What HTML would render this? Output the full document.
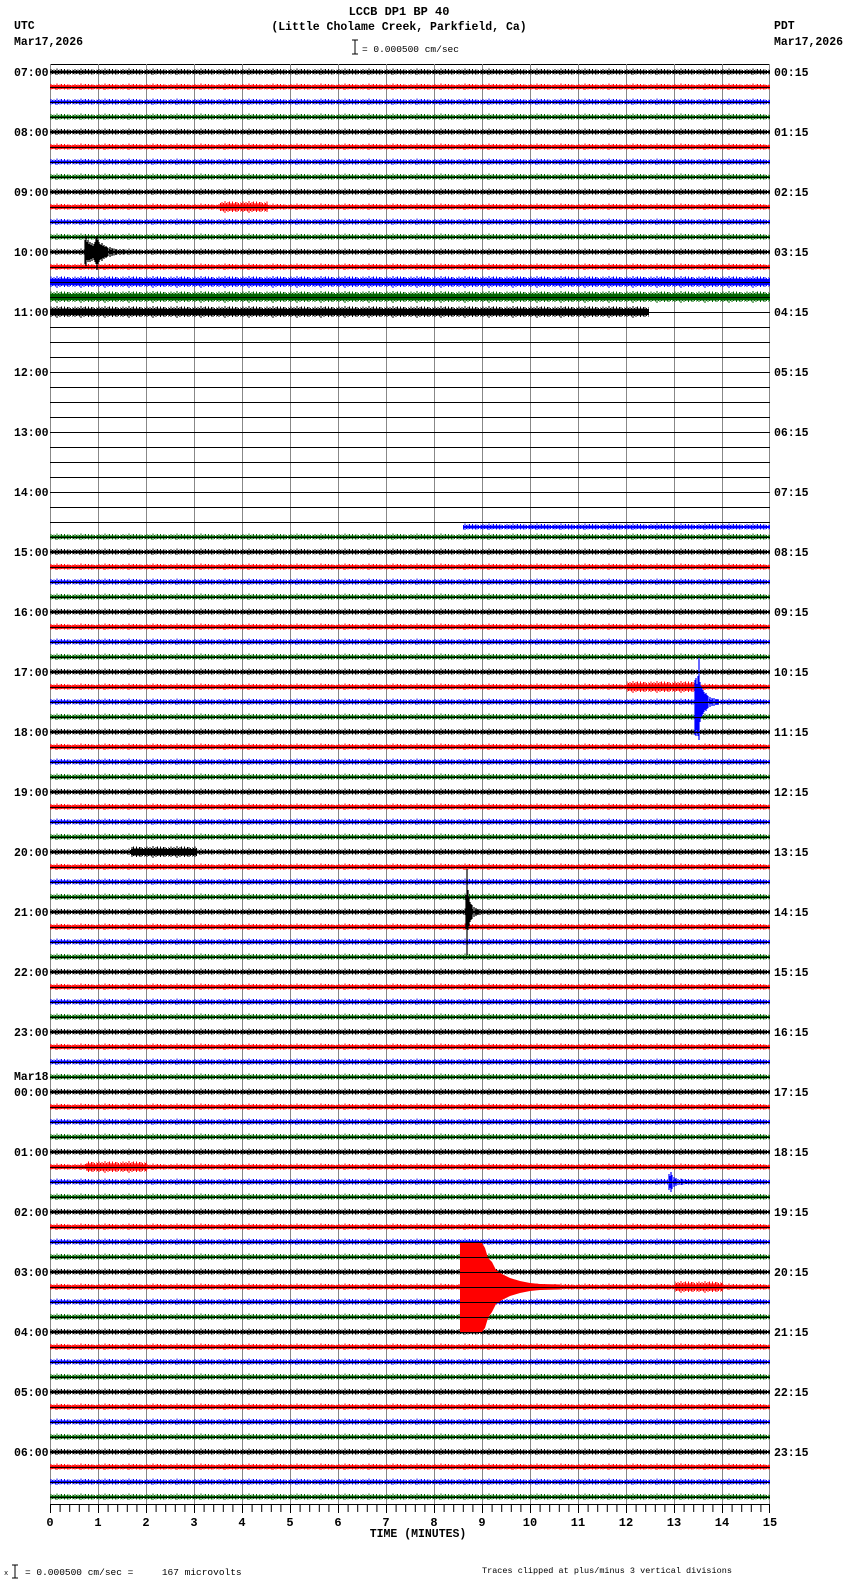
<!DOCTYPE html>
<html><head><meta charset="utf-8"><style>
html,body{margin:0;padding:0;background:#fff;}
svg{display:block}
text{font-family:"Liberation Mono","DejaVu Sans Mono",monospace;font-weight:bold;fill:#000}
</style></head><body>
<svg width="850" height="1584" viewBox="0 0 850 1584" xmlns="http://www.w3.org/2000/svg">
<defs>
<path id="nz" d="M0 3.5v5M1.5 4v4M3 3v5.5M4.5 4v4M6 3.5v4.5M7.5 4v4.5M9 2.5v6.5M10.5 4v4M12 3.5v5M13.5 3v5M15 4v4M16.5 3v5.5M18 4v4M19.5 3.5v5M21 3.5v5M22.5 4v4"/>
<path id="nzt" d="M0 1v10M1.5 2v8M3 0.5v10.5M4.5 2v8M6 1v9M7.5 2v8.5M9 0v12M10.5 2v8M12 1v10M13.5 0.5v9.5M15 2v8M16.5 0.5v10.5M18 2v8M19.5 1v9.5M21 1v10M22.5 2v8"/>
<pattern id="pk" width="24" height="15" patternUnits="userSpaceOnUse" patternTransform="translate(0,66)"><rect x="0" y="5" width="24" height="2" fill="#000"/><use href="#nz" stroke="#000" stroke-width="1"/></pattern>
<pattern id="pr" width="24" height="15" patternUnits="userSpaceOnUse" patternTransform="translate(0,66)"><rect x="0" y="4.5" width="24" height="3" fill="#f00"/><use href="#nz" stroke="#f00" stroke-width="1.1"/></pattern>
<pattern id="pb" width="24" height="15" patternUnits="userSpaceOnUse" patternTransform="translate(0,66)"><rect x="0" y="5" width="24" height="2" fill="#00f"/><use href="#nz" stroke="#00f" stroke-width="1"/></pattern>
<pattern id="pg" width="24" height="15" patternUnits="userSpaceOnUse" patternTransform="translate(0,66)"><rect x="0" y="5" width="24" height="2" fill="#060"/><use href="#nz" stroke="#060" stroke-width="1"/></pattern>
<pattern id="tk" width="24" height="15" patternUnits="userSpaceOnUse" patternTransform="translate(0,66)"><rect x="0" y="3" width="24" height="6" fill="#000"/><use href="#nzt" stroke="#000" stroke-width="1"/></pattern>
<pattern id="tr" width="24" height="15" patternUnits="userSpaceOnUse" patternTransform="translate(0,66)"><rect x="0" y="3.5" width="24" height="5" fill="#f00"/><use href="#nzt" stroke="#f00" stroke-width="1"/></pattern>
<pattern id="tb" width="24" height="15" patternUnits="userSpaceOnUse" patternTransform="translate(0,66)"><rect x="0" y="3" width="24" height="6" fill="#00f"/><use href="#nzt" stroke="#00f" stroke-width="1"/></pattern>
<pattern id="tg" width="24" height="15" patternUnits="userSpaceOnUse" patternTransform="translate(0,66)"><rect x="0" y="3" width="24" height="6" fill="#060"/><use href="#nzt" stroke="#060" stroke-width="1"/></pattern>
</defs>

<!-- header -->
<text x="399" y="15" font-size="12" text-anchor="middle">LCCB DP1 BP 40</text>
<text x="399" y="30" font-size="11.5" text-anchor="middle">(Little Cholame Creek, Parkfield, Ca)</text>
<path d="M355 40v14M352 40h6M352 54h6" stroke="#000" stroke-width="1"/>
<text x="362" y="52" font-size="9.5" style="font-weight:normal">= 0.000500 cm/sec</text>
<text x="14" y="29" font-size="11.5">UTC</text>
<text x="14" y="45" font-size="11.5">Mar17,2026</text>
<text x="774" y="29" font-size="11.5">PDT</text>
<text x="774" y="45" font-size="11.5">Mar17,2026</text>

<!-- grid -->
<line x1="50" y1="64.5" x2="770" y2="64.5" stroke="#000" stroke-width="1"/>
<g stroke="#888" stroke-width="1">
<path d="M50.5 64v1440M98.5 64v1440M146.5 64v1440M194.5 64v1440M242.5 64v1440M290.5 64v1440M338.5 64v1440M386.5 64v1440M434.5 64v1440M482.5 64v1440M530.5 64v1440M578.5 64v1440M626.5 64v1440M674.5 64v1440M722.5 64v1440M769.5 64v1440"/>
</g>

<!-- traces -->
<g>
<rect x="50" y="66" width="720" height="12" fill="url(#pk)"/>
<rect x="50" y="81" width="720" height="12" fill="url(#pr)"/>
<rect x="50" y="96" width="720" height="12" fill="url(#pb)"/>
<rect x="50" y="111" width="720" height="12" fill="url(#pg)"/>
<rect x="50" y="126" width="720" height="12" fill="url(#pk)"/>
<rect x="50" y="141" width="720" height="12" fill="url(#pr)"/>
<rect x="50" y="156" width="720" height="12" fill="url(#pb)"/>
<rect x="50" y="171" width="720" height="12" fill="url(#pg)"/>
<rect x="50" y="186" width="720" height="12" fill="url(#pk)"/>
<rect x="50" y="201" width="720" height="12" fill="url(#pr)"/>
<rect x="50" y="216" width="720" height="12" fill="url(#pb)"/>
<rect x="50" y="231" width="720" height="12" fill="url(#pg)"/>
<rect x="50" y="246" width="720" height="12" fill="url(#pk)"/>
<rect x="50" y="261" width="720" height="12" fill="url(#pr)"/>
<rect x="50" y="276" width="720" height="12" fill="url(#tb)"/>
<rect x="50" y="291" width="720" height="12" fill="url(#tg)"/>
<rect x="50" y="306" width="599" height="12" fill="url(#tk)"/>
<rect x="463" y="516" width="307" height="12" fill="url(#pb)" transform="translate(0,5)"/>
<rect x="50" y="531" width="720" height="12" fill="url(#pg)"/>
<rect x="50" y="546" width="720" height="12" fill="url(#pk)"/>
<rect x="50" y="561" width="720" height="12" fill="url(#pr)"/>
<rect x="50" y="576" width="720" height="12" fill="url(#pb)"/>
<rect x="50" y="591" width="720" height="12" fill="url(#pg)"/>
<rect x="50" y="606" width="720" height="12" fill="url(#pk)"/>
<rect x="50" y="621" width="720" height="12" fill="url(#pr)"/>
<rect x="50" y="636" width="720" height="12" fill="url(#pb)"/>
<rect x="50" y="651" width="720" height="12" fill="url(#pg)"/>
<rect x="50" y="666" width="720" height="12" fill="url(#pk)"/>
<rect x="50" y="681" width="720" height="12" fill="url(#pr)"/>
<rect x="50" y="696" width="720" height="12" fill="url(#pb)"/>
<rect x="50" y="711" width="720" height="12" fill="url(#pg)"/>
<rect x="50" y="726" width="720" height="12" fill="url(#pk)"/>
<rect x="50" y="741" width="720" height="12" fill="url(#pr)"/>
<rect x="50" y="756" width="720" height="12" fill="url(#pb)"/>
<rect x="50" y="771" width="720" height="12" fill="url(#pg)"/>
<rect x="50" y="786" width="720" height="12" fill="url(#pk)"/>
<rect x="50" y="801" width="720" height="12" fill="url(#pr)"/>
<rect x="50" y="816" width="720" height="12" fill="url(#pb)"/>
<rect x="50" y="831" width="720" height="12" fill="url(#pg)"/>
<rect x="50" y="846" width="720" height="12" fill="url(#pk)"/>
<rect x="50" y="861" width="720" height="12" fill="url(#pr)"/>
<rect x="50" y="876" width="720" height="12" fill="url(#pb)"/>
<rect x="50" y="891" width="720" height="12" fill="url(#pg)"/>
<rect x="50" y="906" width="720" height="12" fill="url(#pk)"/>
<rect x="50" y="921" width="720" height="12" fill="url(#pr)"/>
<rect x="50" y="936" width="720" height="12" fill="url(#pb)"/>
<rect x="50" y="951" width="720" height="12" fill="url(#pg)"/>
<rect x="50" y="966" width="720" height="12" fill="url(#pk)"/>
<rect x="50" y="981" width="720" height="12" fill="url(#pr)"/>
<rect x="50" y="996" width="720" height="12" fill="url(#pb)"/>
<rect x="50" y="1011" width="720" height="12" fill="url(#pg)"/>
<rect x="50" y="1026" width="720" height="12" fill="url(#pk)"/>
<rect x="50" y="1041" width="720" height="12" fill="url(#pr)"/>
<rect x="50" y="1056" width="720" height="12" fill="url(#pb)"/>
<rect x="50" y="1071" width="720" height="12" fill="url(#pg)"/>
<rect x="50" y="1086" width="720" height="12" fill="url(#pk)"/>
<rect x="50" y="1101" width="720" height="12" fill="url(#pr)"/>
<rect x="50" y="1116" width="720" height="12" fill="url(#pb)"/>
<rect x="50" y="1131" width="720" height="12" fill="url(#pg)"/>
<rect x="50" y="1146" width="720" height="12" fill="url(#pk)"/>
<rect x="50" y="1161" width="720" height="12" fill="url(#pr)"/>
<rect x="50" y="1176" width="720" height="12" fill="url(#pb)"/>
<rect x="50" y="1191" width="720" height="12" fill="url(#pg)"/>
<rect x="50" y="1206" width="720" height="12" fill="url(#pk)"/>
<rect x="50" y="1221" width="720" height="12" fill="url(#pr)"/>
<rect x="50" y="1236" width="720" height="12" fill="url(#pb)"/>
<rect x="50" y="1251" width="720" height="12" fill="url(#pg)"/>
<rect x="50" y="1266" width="720" height="12" fill="url(#pk)"/>
<rect x="50" y="1281" width="720" height="12" fill="url(#pr)"/>
<rect x="50" y="1296" width="720" height="12" fill="url(#pb)"/>
<rect x="50" y="1311" width="720" height="12" fill="url(#pg)"/>
<rect x="50" y="1326" width="720" height="12" fill="url(#pk)"/>
<rect x="50" y="1341" width="720" height="12" fill="url(#pr)"/>
<rect x="50" y="1356" width="720" height="12" fill="url(#pb)"/>
<rect x="50" y="1371" width="720" height="12" fill="url(#pg)"/>
<rect x="50" y="1386" width="720" height="12" fill="url(#pk)"/>
<rect x="50" y="1401" width="720" height="12" fill="url(#pr)"/>
<rect x="50" y="1416" width="720" height="12" fill="url(#pb)"/>
<rect x="50" y="1431" width="720" height="12" fill="url(#pg)"/>
<rect x="50" y="1446" width="720" height="12" fill="url(#pk)"/>
<rect x="50" y="1461" width="720" height="12" fill="url(#pr)"/>
<rect x="50" y="1476" width="720" height="12" fill="url(#pb)"/>
<rect x="50" y="1491" width="720" height="12" fill="url(#pg)"/>
</g>

<!-- events -->
<rect x="220" y="201" width="48" height="12" fill="url(#tr)"/>
<rect x="627" y="681" width="68" height="12" fill="url(#tr)"/>
<rect x="131" y="846" width="66" height="12" fill="url(#tk)"/>
<rect x="86" y="1161" width="61" height="12" fill="url(#tr)"/>
<rect x="675" y="1281" width="48" height="12" fill="url(#tr)"/>
<path stroke="#000" stroke-width="1.2" d="M85 240v24M86 236v30M87 242v18M88 240v22M89 244v16M90 242v20M91 245v14M92 243v18M93 246v12M94 244v16M95 242v20M96 238v26M97 236v34M98 240v24M99 242v20M100 244v16M101 245v14M102 243v18M103 246v12M104 245v14M105 247v10M106 246v12M107 247v10M108 248v8M110 247v10M112 248v8M114 248.5v7M116 249v6M120 249v6M124 249.5v5"/>
<path stroke="#00f" stroke-width="1.2" d="M695 680v55M696 678v58M697 684v46M698 676v60M699 657v83M700 682v40M701 686v32M702 688v28M703 690v24M704 692v20M705 694v16M706 693v18M707 695v14M708 696v12M710 697v10M712 698v8M714 698v8M716 699v6M718 699v6"/>
<path stroke="#000" stroke-width="1.2" d="M466 895v34M467 869v86M468 890v40M469 898v28M470 902v20M471 904v16M472 905v14M474 907v10M476 908v8M478 909v6M480 909v6"/>
<path stroke="#00f" stroke-width="1.2" d="M669 1174v16M670 1176v12M671 1172v20M672 1175v14M674 1177v10M676 1178v8M678 1179v6M682 1179v6M686 1180v4M690 1180v4"/>
<rect x="460" y="1243" width="22" height="89" fill="#f00"/>
<polygon fill="#f00" points="482,1243 485,1248 488,1258 492,1262 496,1270 502,1274 510,1278 520,1281 530,1283 540,1284 560,1284.5 560,1289.5 540,1290 530,1291 520,1293 510,1296 502,1300 496,1304 492,1312 488,1318 485,1328 482,1332"/>

<!-- baselines -->
<g stroke="#000" stroke-width="1">
<path d="M50 72.5h720M50 87.5h720M50 102.5h720M50 117.5h720M50 132.5h720M50 147.5h720M50 162.5h720M50 177.5h720M50 192.5h720M50 207.5h720M50 222.5h720M50 237.5h720M50 252.5h720M50 267.5h720M50 282.5h720M50 297.5h720M50 312.5h720M50 327.5h720M50 342.5h720M50 357.5h720M50 372.5h720M50 387.5h720M50 402.5h720M50 417.5h720M50 432.5h720M50 447.5h720M50 462.5h720M50 477.5h720M50 492.5h720M50 507.5h720M50 522.5h720M50 537.5h720M50 552.5h720M50 567.5h720M50 582.5h720M50 597.5h720M50 612.5h720M50 627.5h720M50 642.5h720M50 657.5h720M50 672.5h720M50 687.5h720M50 702.5h720M50 717.5h720M50 732.5h720M50 747.5h720M50 762.5h720M50 777.5h720M50 792.5h720M50 807.5h720M50 822.5h720M50 837.5h720M50 852.5h720M50 867.5h720M50 882.5h720M50 897.5h720M50 912.5h720M50 927.5h720M50 942.5h720M50 957.5h720M50 972.5h720M50 987.5h720M50 1002.5h720M50 1017.5h720M50 1032.5h720M50 1047.5h720M50 1062.5h720M50 1077.5h720M50 1092.5h720M50 1107.5h720M50 1122.5h720M50 1137.5h720M50 1152.5h720M50 1167.5h720M50 1182.5h720M50 1197.5h720M50 1212.5h720M50 1227.5h720M50 1242.5h720M50 1257.5h720M50 1272.5h720M50 1287.5h720M50 1302.5h720M50 1317.5h720M50 1332.5h720M50 1347.5h720M50 1362.5h720M50 1377.5h720M50 1392.5h720M50 1407.5h720M50 1422.5h720M50 1437.5h720M50 1452.5h720M50 1467.5h720M50 1482.5h720M50 1497.5h720"/>
</g>

<!-- left labels -->
<g font-size="11.5">
<text x="14" y="76">07:00</text><text x="14" y="136">08:00</text><text x="14" y="196">09:00</text><text x="14" y="256">10:00</text>
<text x="14" y="316">11:00</text><text x="14" y="376">12:00</text><text x="14" y="436">13:00</text><text x="14" y="496">14:00</text>
<text x="14" y="556">15:00</text><text x="14" y="616">16:00</text><text x="14" y="676">17:00</text><text x="14" y="736">18:00</text>
<text x="14" y="796">19:00</text><text x="14" y="856">20:00</text><text x="14" y="916">21:00</text><text x="14" y="976">22:00</text>
<text x="14" y="1036">23:00</text><text x="14" y="1080">Mar18</text><text x="14" y="1096">00:00</text><text x="14" y="1156">01:00</text>
<text x="14" y="1216">02:00</text><text x="14" y="1276">03:00</text><text x="14" y="1336">04:00</text><text x="14" y="1396">05:00</text>
<text x="14" y="1456">06:00</text>
</g>
<!-- right labels -->
<g font-size="11.5">
<text x="774" y="76">00:15</text><text x="774" y="136">01:15</text><text x="774" y="196">02:15</text><text x="774" y="256">03:15</text>
<text x="774" y="316">04:15</text><text x="774" y="376">05:15</text><text x="774" y="436">06:15</text><text x="774" y="496">07:15</text>
<text x="774" y="556">08:15</text><text x="774" y="616">09:15</text><text x="774" y="676">10:15</text><text x="774" y="736">11:15</text>
<text x="774" y="796">12:15</text><text x="774" y="856">13:15</text><text x="774" y="916">14:15</text><text x="774" y="976">15:15</text>
<text x="774" y="1036">16:15</text><text x="774" y="1096">17:15</text><text x="774" y="1156">18:15</text><text x="774" y="1216">19:15</text>
<text x="774" y="1276">20:15</text><text x="774" y="1336">21:15</text><text x="774" y="1396">22:15</text><text x="774" y="1456">23:15</text>
</g>

<!-- axis -->
<line x1="50" y1="1504.5" x2="770" y2="1504.5" stroke="#000"/>
<path stroke="#000" stroke-width="1" d="M50.5 1504v9M60.1 1504v8M69.7 1504v8M79.3 1504v8M88.9 1504v8M98.5 1504v9M108.1 1504v8M117.7 1504v8M127.3 1504v8M136.9 1504v8M146.5 1504v9M156.1 1504v8M165.7 1504v8M175.3 1504v8M184.9 1504v8M194.5 1504v9M204.1 1504v8M213.7 1504v8M223.3 1504v8M232.9 1504v8M242.5 1504v9M252.1 1504v8M261.7 1504v8M271.3 1504v8M280.9 1504v8M290.5 1504v9M300.1 1504v8M309.7 1504v8M319.3 1504v8M328.9 1504v8M338.5 1504v9M348.1 1504v8M357.7 1504v8M367.3 1504v8M376.9 1504v8M386.5 1504v9M396.1 1504v8M405.7 1504v8M415.3 1504v8M424.9 1504v8M434.5 1504v9M444.1 1504v8M453.7 1504v8M463.3 1504v8M472.9 1504v8M482.5 1504v9M492.1 1504v8M501.7 1504v8M511.3 1504v8M520.9 1504v8M530.5 1504v9M540.1 1504v8M549.7 1504v8M559.3 1504v8M568.9 1504v8M578.5 1504v9M588.1 1504v8M597.7 1504v8M607.3 1504v8M616.9 1504v8M626.5 1504v9M636.1 1504v8M645.7 1504v8M655.3 1504v8M664.9 1504v8M674.5 1504v9M684.1 1504v8M693.7 1504v8M703.3 1504v8M712.9 1504v8M722.5 1504v9M732.1 1504v8M741.7 1504v8M751.3 1504v8M760.9 1504v8M769.5 1504v9"/>
<g font-size="12" text-anchor="middle">
<text x="50" y="1526">0</text><text x="98" y="1526">1</text><text x="146" y="1526">2</text><text x="194" y="1526">3</text>
<text x="242" y="1526">4</text><text x="290" y="1526">5</text><text x="338" y="1526">6</text><text x="386" y="1526">7</text>
<text x="434" y="1526">8</text><text x="482" y="1526">9</text><text x="530" y="1526">10</text><text x="578" y="1526">11</text>
<text x="626" y="1526">12</text><text x="674" y="1526">13</text><text x="722" y="1526">14</text><text x="770" y="1526">15</text>
</g>
<text x="418" y="1537" font-size="11.5" text-anchor="middle">TIME (MINUTES)</text>

<!-- footer -->
<text x="4" y="1575" font-size="7" style="font-weight:normal">x</text>
<path d="M15 1565v13M12 1565h6M12 1578h6" stroke="#000" stroke-width="1"/>
<text x="25" y="1575" font-size="9.5" style="font-weight:normal;white-space:pre" xml:space="preserve">= 0.000500 cm/sec =     167 microvolts</text>
<text x="482" y="1573" font-size="8.5" style="font-weight:normal">Traces clipped at plus/minus 3 vertical divisions</text>
</svg>
</body></html>
